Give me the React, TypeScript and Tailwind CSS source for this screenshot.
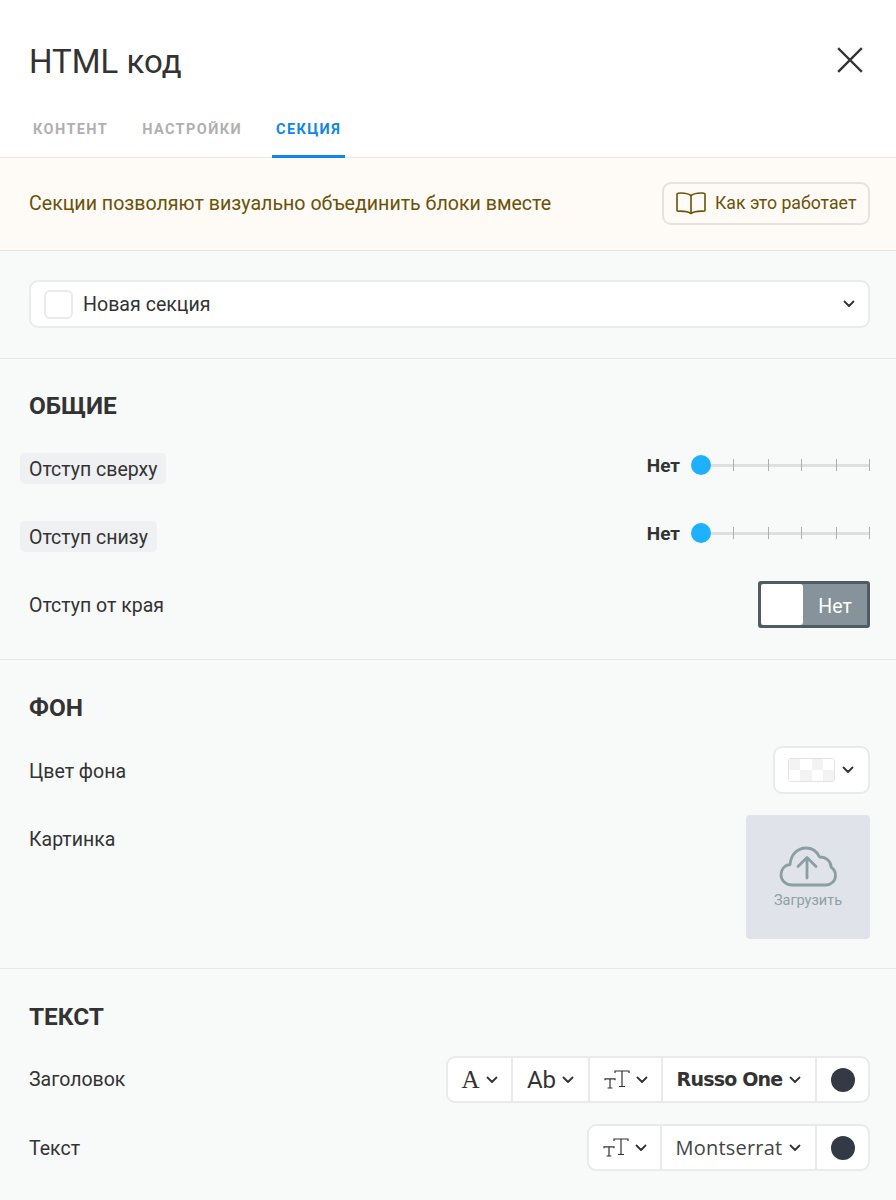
import React from "react";

const Chevron = ({ className = "" }: { className?: string }) => (
  <svg width="12" height="8" viewBox="0 0 12 8" fill="none" className={className}>
    <path d="M1.500 1.500 6 6l4.500-4.500" stroke="#333" strokeWidth="1.8" strokeLinecap="round" strokeLinejoin="round" />
  </svg>
);

const TextSize = () => (
  <svg width="26" height="20" viewBox="0 0 26 20" fill="none" stroke="#333" strokeWidth="1.2">
    <path d="M1 10.200V8.800h10v1.400M6 8.800V18M3.600 18h4.800" />
    <path d="M11 3V1h14v2M18 1v15.500M15 16.500h6" />
  </svg>
);

const Slider = () => (
  <div className="flex items-center gap-[11px]">
    <span className="text-[19px] font-bold text-[#333] leading-none">Нет</span>
    <div className="relative w-[179px] h-[20px] flex items-center">
      <div className="w-full h-[3px] bg-[#dedfdf]" />
      <div className="absolute left-0 top-0 w-[20px] h-[20px] rounded-full bg-[#1eb1ff]" />
      {[42, 77, 110, 145, 178].map((x) => (
        <div key={x} className="absolute top-[4px] w-px h-[12px] bg-[#aeb1b1]" style={{ left: x }} />
      ))}
    </div>
  </div>
);

const Label = ({ children, hl }: { children: React.ReactNode; hl?: boolean }) => (
  <span className={`inline-block h-[31px] text-[19.5px] leading-[33px] text-[#333] ${hl ? "bg-[#eef0f1] rounded-[5px] px-[9px] -ml-[9px]" : ""}`}>{children}</span>
);

const Cell = ({ children, className = "" }: { children: React.ReactNode; className?: string }) => (
  <div className={`flex items-center justify-center h-full border-r-2 border-[#e9ebeb] ${className}`}>{children}</div>
);

const Dot = () => (
  <div className="flex items-center justify-center w-[51px] h-full">
    <div className="w-[24px] h-[24px] rounded-full bg-[#333a45]" />
  </div>
);

const H = ({ children }: { children: React.ReactNode }) => (
  <h2 className="text-[24.4px] leading-[28px] font-bold text-[#333]">{children}</h2>
);

export default function App() {
  return (
    <div className="w-[896px] h-[1200px] overflow-hidden bg-[#f8f9f9] text-[#333] font-['Roboto',sans-serif]">
      <div className="bg-white h-[158px] border-b border-[#e6e6e6] px-[29px] pt-[42px]">
        <div className="flex justify-between items-center h-[40px]">
          <h1 className="text-[33px] leading-[40px] text-[#333]">HTML код</h1>
          <svg width="28" height="28" viewBox="0 0 28 28" className="mr-[3px] -mt-[5px]" stroke="#333" strokeWidth="2.4" strokeLinecap="square">
            <path d="M3 3l22 22M25 3L3 25" />
          </svg>
        </div>
        <div className="flex gap-[26px] mt-[21px] text-[14.5px] leading-[20px] font-bold uppercase tracking-[1.4px]">
          <div className="px-[4px] h-[55px] pt-[17px] text-[#b0b0b0]">Контент</div>
          <div className="px-[4px] h-[55px] pt-[17px] text-[#b0b0b0]">Настройки</div>
          <div className="px-[4px] h-[55px] pt-[17px] text-[#0f86e8] border-b-[3px] border-[#0f86e8]">Секция</div>
        </div>
      </div>

      <div className="h-[93px] bg-[#fefaf6] border-b border-[#e6e6e6] px-[29px] pr-[26px] flex items-center justify-between text-[#6b5208]">
        <span className="text-[19.6px]">Секции позволяют визуально объединить блоки вместе</span>
        <button className="flex items-center gap-[9px] w-[208px] h-[43px] -mt-[2px] pl-[12px] rounded-[9px] border-2 border-[#e6e3de] text-[17.7px]">
          <svg width="30" height="24" viewBox="0 0 30 24" fill="none" stroke="#6b5208" strokeWidth="1.6" strokeLinejoin="round">
            <path d="M15 4.500C12 2.500 7 1.800 2 2.200c-.6 0-1 .4-1 1v16c0 .6.400 1 1 1 5-.2 10 0 13 2.300 3-2.300 8-2.500 13-2.300.6 0 1-.4 1-1v-16c0-.6-.4-1-1-1-5-.4-10 .3-13 2.300Z" />
            <path d="M15 4.500v18" />
          </svg>
          Как это работает
        </button>
      </div>

      <div className="h-[108px] border-b border-[#e6e8e8] px-[29px] pr-[26px] pt-[29px]">
        <div className="h-[48px] bg-white border-2 border-[#e9ebeb] rounded-[9px] flex items-center pl-[13px] pr-[13px]">
          <div className="w-[29px] h-[29px] bg-white border-2 border-[#e9ebeb] rounded-[6px] mr-[10px]" />
          <span className="text-[19.6px] flex-1 pt-[2px]">Новая секция</span>
          <Chevron />
        </div>
      </div>

      <div className="h-[301px] border-b border-[#e6e8e8] px-[29px] pr-[26px] pt-[33px]">
        <H>ОБЩИЕ</H>
        <div className="flex justify-between items-center h-[31px] mt-[33px]">
          <Label hl>Отступ сверху</Label>
          <div className="-mt-[7px]"><Slider /></div>
        </div>
        <div className="flex justify-between items-center h-[31px] mt-[37px]">
          <Label hl>Отступ снизу</Label>
          <div className="-mt-[7px]"><Slider /></div>
        </div>
        <div className="flex justify-between items-center h-[47px] mt-[29px]">
          <Label>Отступ от края</Label>
          <div className="w-[112px] h-[47px] rounded-[3px] border-[3px] border-[#505b64] bg-[#86939a] flex items-center">
            <div className="w-[42px] h-[41px] bg-white rounded-[3px]" />
            <span className="flex-1 text-center text-white text-[19.5px] pt-[4px]">Нет</span>
          </div>
        </div>
      </div>

      <div className="h-[309px] border-b border-[#e6e8e8] px-[29px] pr-[26px] pt-[34px]">
        <H>ФОН</H>
        <div className="flex justify-between items-center h-[48px] mt-[24px]">
          <Label>Цвет фона</Label>
          <div className="w-[97px] h-[48px] bg-white border-2 border-[#e9ebeb] rounded-[9px] flex items-center pl-[13px] gap-[7px]">
            <div className="w-[47px] h-[24px] rounded-[3px] border border-[#e2e3e3] overflow-hidden grid grid-cols-4 grid-rows-2">
              <div className="bg-[#f3f3f3]" /><div className="bg-white" /><div className="bg-[#f3f3f3]" /><div className="bg-white" />
              <div className="bg-white" /><div className="bg-[#f3f3f3]" /><div className="bg-white" /><div className="bg-[#f3f3f3]" />
            </div>
            <Chevron />
          </div>
        </div>
        <div className="flex justify-between items-start mt-[21px]">
          <div className="mt-[8px]"><Label>Картинка</Label></div>
          <div className="w-[124px] h-[124px] rounded-[4px] bg-[#e0e3ea] flex flex-col items-center pt-[31px]">
            <svg width="58" height="41" viewBox="0 0 58 41" fill="none" stroke="#8c9ea5" strokeWidth="2.800" strokeLinecap="round" strokeLinejoin="round">
              <path d="M13 39C6 39 2 34 2 28.500 2 23 6 19 11 18.500 12 8 19 2 27 2c6 0 11 3.500 13.500 9C47 11 52 15 52 21c3 2 4.500 5 4.500 8.500C56.500 35 52 39 47 39H13Z" />
              <path d="M28 32V12M19 20.500l9-9 9 9" />
            </svg>
            <span className="text-[14.5px] text-[#909fa6] mt-[3px]">Загрузить</span>
          </div>
        </div>
      </div>

      <div className="px-[29px] pr-[26px] pt-[34px]">
        <H>ТЕКСТ</H>
        <div className="flex justify-between items-center h-[47px] mt-[25px]">
          <div className="-mt-[2px]"><Label>Заголовок</Label></div>
          <div className="h-[47px] bg-white border-2 border-[#e9ebeb] rounded-[9px] flex items-center">
            <Cell className="w-[65px] gap-[6px]">
              <span className="text-[25px] font-['Liberation_Serif',serif] text-[#333] leading-none">A</span><Chevron />
            </Cell>
            <Cell className="w-[77px] gap-[6px]">
              <span className="text-[24px] text-[#333] leading-none">Ab</span><Chevron />
            </Cell>
            <Cell className="w-[73px] gap-[6px]"><TextSize /><Chevron /></Cell>
            <Cell className="w-[154px] gap-[7px]">
              <span className="text-[19px] font-bold font-['DejaVu_Sans',sans-serif] tracking-[-0.8px] leading-none text-[#333]">Russo One</span><Chevron />
            </Cell>
            <Dot />
          </div>
        </div>
        <div className="flex justify-between items-center h-[47px] mt-[21px]">
          <Label>Текст</Label>
          <div className="h-[47px] bg-white border-2 border-[#e9ebeb] rounded-[9px] flex items-center">
            <Cell className="w-[73px] gap-[6px]"><TextSize /><Chevron /></Cell>
            <Cell className="w-[155px] gap-[7px]">
              <span className="text-[20px] font-['Open_Sans',sans-serif] tracking-[0.2px] leading-none text-[#444]">Montserrat</span><Chevron />
            </Cell>
            <Dot />
          </div>
        </div>
      </div>
    </div>
  );
}
